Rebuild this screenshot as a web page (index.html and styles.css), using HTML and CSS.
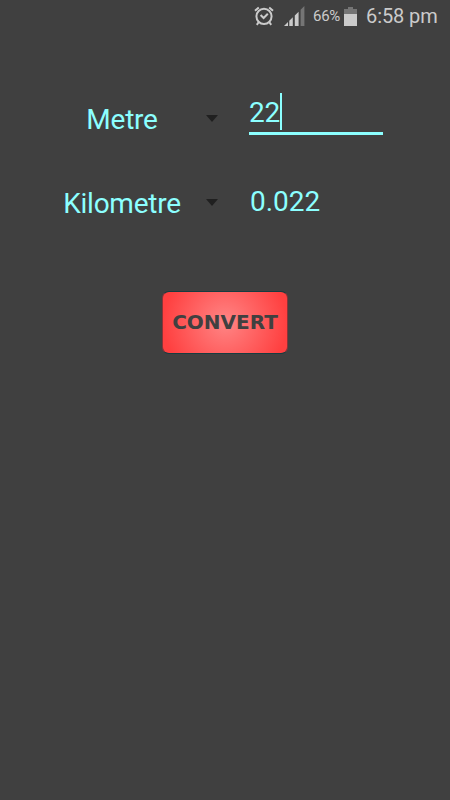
FILE: index.html
```html
<!DOCTYPE html>
<html lang="en">
  <head>
    <meta charset="UTF-8" />
    <meta name="viewport" content="width=device-width, initial-scale=1.0" />
    <link rel="stylesheet" href="styles.css">
    <title>Unit Converter</title>
  </head>
  <body>
    <header class="status-bar">
      <svg class="alarm" width="20" height="20" viewBox="0 0 20 20">
        <circle cx="10" cy="10.3" r="7.6" />
        <path d="M6.6 9 L9.6 12 L13.8 7.8" />
        <path d="M1 4.8 L4.8 1.4 M19 4.8 L15.2 1.4 M4.8 16 L2.8 18.8 M15.2 16 L17.2 18.8" />
      </svg>
      <svg class="signal" width="21" height="21" viewBox="0 0 21 21">
        <path class="on" d="M0 20 L4 16 V20 Z M5.3 14.7 L8.8 11.2 V20 H5.3 Z M10.8 9.5 L14.6 5.7 V20 H10.8 Z" />
        <path class="off" d="M16.6 3.7 L20.4 0 V20 H16.6 Z" />
      </svg>
      <span class="percent">66%</span>
      <svg class="battery" width="13" height="19" viewBox="0 0 13 19">
        <path class="off" d="M4 0 H9 V2 H13 V7 H0 V2 H4 Z" />
        <path class="on" d="M0 7 H13 V19 H0 Z" />
      </svg>
      <span class="time">6:58 pm</span>
    </header>

    <main>
      <div class="row">
        <div class="unit">Metre</div>
        <span class="arrow"></span>
        <div class="input"><span class="typed">22</span></div>
      </div>
      <div class="row">
        <div class="unit">Kilometre</div>
        <span class="arrow"></span>
        <div class="result">0.022</div>
      </div>
      <button class="convert">CONVERT</button>
    </main>
  </body>
</html>
```
FILE: styles.css
```css
* {
  padding: 0;
  margin: 0;
  box-sizing: border-box;
}

body {
  height: 800px;
  background-color: #404040;
  font-family: Roboto, sans-serif;
  overflow: hidden;
}

.status-bar {
  display: flex;
  height: 32px;
  padding-right: 13px;
  align-items: center;
  justify-content: flex-end;
  color: #cbcbcb;
}

.alarm {
  margin: -1px 10px 0 0;
  fill: none;
  stroke: #cbcbcb;
  stroke-width: 2;
}

.signal {
  margin-right: 8px;
}

.on {
  fill: #cbcbcb;
}

.off {
  fill: #757575;
}

.percent {
  width: 27px;
  margin-right: 4px;
  font-size: 15px;
  letter-spacing: -0.3px;
  white-space: nowrap;
}

.battery {
  margin-right: 9px;
}

.time {
  font-size: 20px;
  width: 71px;
  letter-spacing: -0.1px;
  white-space: nowrap;
}

main {
  display: flex;
  flex-direction: column;
  align-items: center;
  padding-top: 54px;
}

.row {
  display: flex;
  width: 450px;
  height: 84px;
  padding-left: 44px;
  align-items: flex-start;
  color: #8cffff;
  font-size: 28px;
  line-height: 34px;
}

.unit {
  width: 156px;
  padding-top: 17px;
  text-align: center;
  letter-spacing: -0.25px;
}

.arrow {
  margin: 29px 0 0 6px;
  border: 6px solid transparent;
  border-top: 7px solid #202020;
  border-bottom: none;
}

.input {
  width: 134px;
  height: 42px;
  margin: 7px 0 0 31px;
  border-bottom: 3px solid #8cffff;
}

.typed {
  display: inline-block;
  height: 37px;
  line-height: 40px;
  letter-spacing: -0.3px;
  border-right: 2px solid #8cffff;
}

.result {
  margin: 15px 0 0 32px;
}

.convert {
  width: 126px;
  height: 63px;
  margin-top: 37px;
  padding-bottom: 2px;
  border: 1px solid #8a3438;
  border-top-color: #163c40;
  border-bottom-color: #163c40;
  border-radius: 7px;
  background: radial-gradient(circle 62px at center, #ff8585, #ff4040);
  color: #404040;
  font-family: "DejaVu Sans", Verdana, sans-serif;
  font-size: 20px;
  font-weight: bold;
}
```
